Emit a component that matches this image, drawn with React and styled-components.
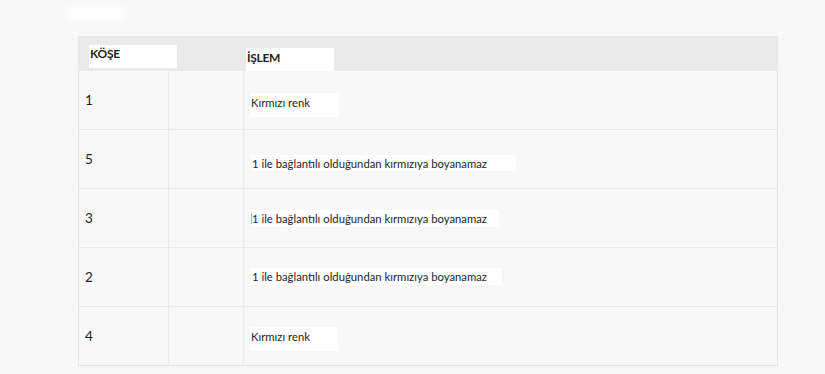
import React from "react";
import styled, { createGlobalStyle } from "styled-components";

const GlobalStyle = createGlobalStyle`
  html, body {
    margin: 0;
    background: #f8f8f8;
    font-family: Lato, "Open Sans", sans-serif;
    color: #1e1e1e;
  }
`;

const Page = styled.div`
  width: 825px;
  height: 374px;
  box-sizing: border-box;
  padding: 0 47px 0 78px;
  overflow: hidden;
`;

const Smudge = styled.div`
  width: 60px;
  height: 12px;
  margin: 7px 0 0 -12px;
  background: #ffffff;
  border-radius: 6px;
  filter: blur(3px);
`;

const Table = styled.div`
  margin-top: 17px;
  border: 1px solid #e6e6e6;
  border-top: none;
`;

const HeaderRow = styled.div`
  display: grid;
  grid-template-columns: 167px 1fr;
  height: 34px;
  background: #eaeaea;
`;

const HeadLabel = styled.div`
  box-sizing: border-box;
  width: 88px;
  height: 23px;
  margin: ${p => p.$top}px 0 0 ${p => p.$left}px;
  padding: ${p => p.$pad}px 0 0 1px;
  background: #ffffff;
  font-weight: 700;
  font-size: 12px;
  line-height: 14px;
  letter-spacing: -0.3px;
`;

const Row = styled.div`
  display: grid;
  grid-template-columns: 90px 75px 1fr;
  height: 58px;
  border-top: 1px solid #e9e9e9;
`;

const Cell = styled.div`
  display: flex;
  align-items: center;
  border-right: ${p => (p.$line ? "1px solid #ececec" : "none")};
`;

const Num = styled.span`
  padding-left: 6px;
  font-size: 13.5px;
  line-height: 16px;
`;

const Note = styled.div`
  position: relative;
  box-sizing: border-box;
  width: ${p => p.$w}px;
  height: ${p => p.$h}px;
  margin: ${p => p.$shift}px 0 0 ${p => p.$left}px;
  padding: 0 0 ${p => p.$lift}px 1px;
  display: flex;
  align-items: center;
  background: #ffffff;
  font-size: 11.3px;
  white-space: nowrap;
`;

const Caret = styled.span`
  position: absolute;
  left: 0;
  top: 3px;
  width: 1px;
  height: 11px;
  background: #e2b87a;
`;

const rows = [
  { n: "1", text: "Kırmızı renk", w: 89, h: 24, shift: 10, left: 6, lift: 5 },
  { n: "5", text: "1 ile bağlantılı olduğundan kırmızıya boyanamaz", w: 265, h: 16, shift: 8, left: 7, lift: 0 },
  { n: "3", text: "1 ile bağlantılı olduğundan kırmızıya boyanamaz", w: 248, h: 17, shift: 1, left: 7, lift: 0, caret: true },
  { n: "2", text: "1 ile bağlantılı olduğundan kırmızıya boyanamaz", w: 251, h: 17, shift: -2, left: 7, lift: 0 },
  { n: "4", text: "Kırmızı renk", w: 88, h: 24, shift: 5, left: 6, lift: 5 },
];

export default function App() {
  return (
    <Page>
      <GlobalStyle />
      <Smudge />
      <Table>
        <HeaderRow>
          <HeadLabel $top={9} $left={10} $pad={2}>KÖŞE</HeadLabel>
          <HeadLabel $top={12} $left={0} $pad={3}>İŞLEM</HeadLabel>
        </HeaderRow>
        {rows.map(r => (
          <Row key={r.n}>
            <Cell $line>
              <Num>{r.n}</Num>
            </Cell>
            <Cell $line />
            <Cell>
              <Note $w={r.w} $h={r.h} $shift={r.shift} $left={r.left} $lift={r.lift}>
                {r.caret && <Caret />}
                {r.text}
              </Note>
            </Cell>
          </Row>
        ))}
      </Table>
    </Page>
  );
}
